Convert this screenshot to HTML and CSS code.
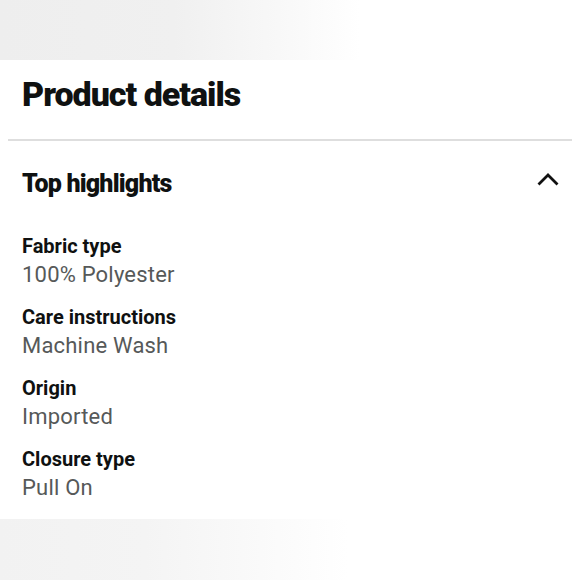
FILE: index.html
```html
<!DOCTYPE html>
<html lang="en">
<head>
<meta charset="utf-8">
<title>Product details</title>
<link rel="stylesheet" href="styles.css">
</head>
<body>
<div class="band"></div>
<main class="panel">
  <h1 class="title">Product details</h1>
  <hr class="divider">
  <section class="section">
    <div class="section-head">
      <h2 class="section-title">Top highlights</h2>
      <svg class="chevron" width="22" height="14" viewBox="0 0 22 14" aria-hidden="true">
        <path d="M1.5 12.5 L11 3 L20.5 12.5" fill="none" stroke="#111" stroke-width="2.8"/>
      </svg>
    </div>
    <dl class="specs">
      <div class="spec"><dt>Fabric type</dt><dd>100% Polyester</dd></div>
      <div class="spec"><dt>Care instructions</dt><dd>Machine Wash</dd></div>
      <div class="spec"><dt>Origin</dt><dd>Imported</dd></div>
      <div class="spec"><dt>Closure type</dt><dd>Pull On</dd></div>
    </dl>
  </section>
</main>
<div class="band band-bottom"></div>
</body>
</html>
```
FILE: styles.css
```css
* { box-sizing: border-box; }
html, body { margin: 0; padding: 0; background: #fff; }
body { font-family: Roboto, "Noto Sans", sans-serif; color: #0f1111; width: 580px; height: 580px; overflow: hidden; }

.band {
  height: 60px;
  background: linear-gradient(90deg, #eeeeee 0%, #f0f0f0 30%, #f8f8f8 48%, #ffffff 62%);
}
.band-bottom {
  height: 61px;
  background: linear-gradient(90deg, #f2f2f2 0%, #f4f4f4 25%, #fafafa 45%, #ffffff 60%);
}

.panel {
  height: 459px;
  padding: 14px 8px 0;
}
.title {
  margin: 0 0 0 14px;
  font-size: 34px;
  font-weight: 900;
  letter-spacing: -1px;
  line-height: 40px;
}
.divider {
  margin: 25px 0 0;
  border: 0;
  border-top: 2px solid #dedede;
}
.section { padding: 0 14px; }
.section-head {
  display: flex;
  align-items: center;
  justify-content: space-between;
  height: 84px;
}
.section-title {
  margin: 0;
  font-size: 25px;
  font-weight: 900;
  letter-spacing: -0.8px;
}
.chevron { margin-right: -1px; margin-top: -8px; }

.specs { margin: 8px 0 0; }
.spec { margin-bottom: 14px; }
.spec dt {
  font-size: 20px;
  font-weight: 700;
  line-height: 26px;
  letter-spacing: 0;
}
.spec dd {
  margin: 0;
  font-size: 22px;
  line-height: 31px;
  color: #565959;
  letter-spacing: 0.2px;
}
```
